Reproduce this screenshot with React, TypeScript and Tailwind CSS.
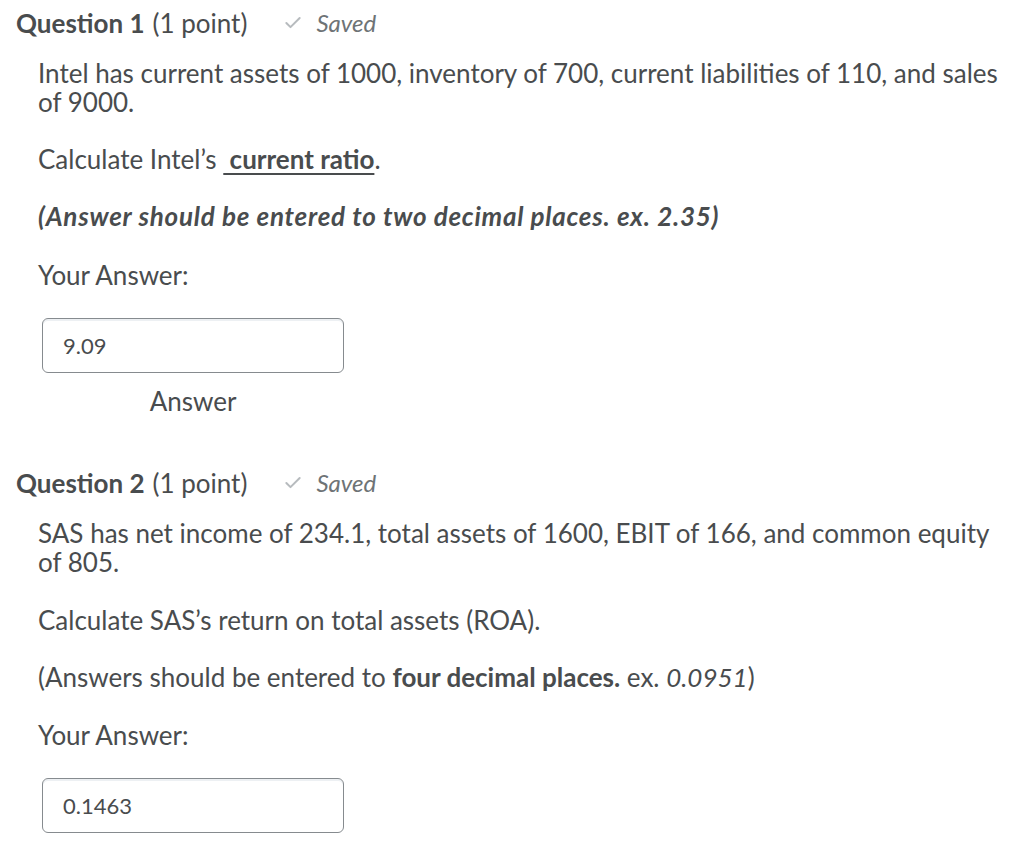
import { Check } from "lucide-react";

type Head = { n: number };

function QuestionHead({ n }: Head) {
  return (
    <div className="flex items-center h-[30px] text-[26px] leading-[30px]">
      <span className="font-bold">Question {n}</span>
      <span className="ml-[8px]">(1 point)</span>
      <span className="ml-[36px] flex items-center text-[#6e7376] text-[24px] italic">
        <Check className="w-[20px] h-[20px] text-[#b7bbbe] mr-[13px]" strokeWidth={2.4} />
        Saved
      </span>
    </div>
  );
}

function AnswerBox({ value }: { value: string }) {
  return (
    <div className="ml-[4px] w-[302px] h-[55px] rounded-[6px] border border-[#868b8f] shadow-[inset_0_2px_0_0_rgba(185,194,208,0.25)] flex items-center px-[20px] text-[22px]">
      {value}
    </div>
  );
}

export default function App() {
  return (
    <div
      className="min-h-[850px] bg-white text-[#494c4e] px-[16px]"
      style={{ fontFamily: "Lato, 'Open Sans', sans-serif" }}
    >
      <div className="pt-[8px]">
        <QuestionHead n={1} />
      </div>
      <div className="pl-[22px] text-[26px] leading-[29px]">
        <p className="mt-[21px]">
          Intel has current assets of 1000, inventory of 700, current liabilities of 110, and sales of 9000.
        </p>
        <p className="mt-[28px]">
          Calculate Intel’s{" "}
          <span className="font-bold underline underline-offset-[4px] decoration-[2px]">&nbsp;current ratio</span>.
        </p>
        <p className="mt-[28px] font-bold italic tracking-[0.75px]">
          (Answer should be entered to two decimal places. ex. 2.35)
        </p>
        <p className="mt-[30px]">Your Answer:</p>
        <div className="mt-[27.5px]">
          <AnswerBox value="9.09" />
        </div>
        <div className="ml-[4px] w-[302px] text-center mt-[14px]">Answer</div>
      </div>

      <div className="mt-[52.5px]">
        <QuestionHead n={2} />
      </div>
      <div className="pl-[22px] text-[26px] leading-[29px]">
        <p className="mt-[20.5px]">
          SAS has net income of 234.1, total assets of 1600, EBIT of 166, and common equity of 805.
        </p>
        <p className="mt-[29.5px]">Calculate SAS’s return on total assets (ROA).</p>
        <p className="mt-[28px]">
          (Answers should be entered to <span className="font-bold">four decimal places.</span> ex.{" "}
          <span className="italic">0.0951</span>)
        </p>
        <p className="mt-[28.5px]">Your Answer:</p>
        <div className="mt-[28px]">
          <AnswerBox value="0.1463" />
        </div>
      </div>
    </div>
  );
}
